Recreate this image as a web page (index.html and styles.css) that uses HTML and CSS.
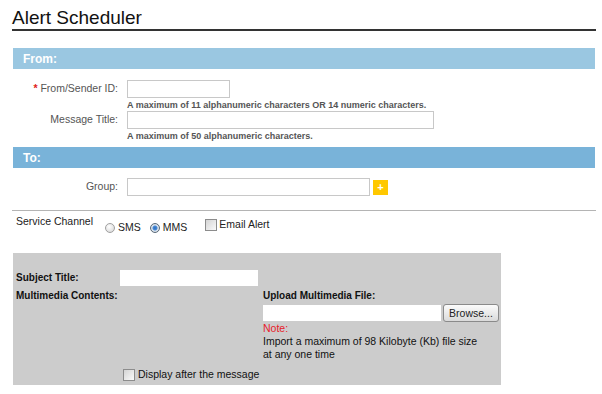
FILE: index.html
```html
<!DOCTYPE html>
<html>
<head>
  <meta charset="utf-8">
  <link rel="stylesheet" href="styles.css">
</head>
<body>
  <h1 class="page-title">Alert Scheduler</h1>

  <div class="section-bar from-bar">From:</div>
  <div class="field-grid from-fields">
    <label class="field-label"><span class="required">*</span> From/Sender ID:</label>
    <div class="field">
      <input type="text" class="text-input sender-input" />
      <div class="hint">A maximum of 11 alphanumeric characters OR 14 numeric characters.</div>
    </div>
    <label class="field-label">Message Title:</label>
    <div class="field">
      <input type="text" class="text-input title-input" />
      <div class="hint">A maximum of 50 alphanumeric characters.</div>
    </div>
  </div>

  <div class="section-bar to-bar">To:</div>
  <div class="field-grid to-fields">
    <label class="field-label">Group:</label>
    <div class="field group-field">
      <input type="text" class="text-input group-input" />
      <button class="add-btn">+</button>
    </div>
  </div>

  <div class="channel-row">
    <span class="channel-label">Service Channel</span>
    <label class="choice radio-choice"><input type="radio" name="channel" />SMS</label>
    <label class="choice radio-choice"><input type="radio" name="channel" checked />MMS</label>
    <label class="choice check-choice"><input type="checkbox" />Email Alert</label>
  </div>

  <div class="mms-box">
    <div class="mms-label subject-label">Subject Title:</div>
    <div><input type="text" class="plain-input subject-input" /></div>
    <div></div>

    <div class="mms-label contents-label">Multimedia Contents:</div>
    <div class="upload-col">
      <div class="mms-label">Upload Multimedia File:</div>
      <div class="upload-row">
        <input type="text" class="plain-input file-input" />
        <button class="browse-btn">Browse...</button>
      </div>
      <div class="note">Note:</div>
      <div class="note-text">Import a maximum of 98 Kilobyte (Kb) file size<br>at any one time</div>
    </div>

    <div></div>
    <label class="display-after"><input type="checkbox" />Display after the message</label>
  </div>
</body>
</html>
```

FILE: styles.css
```css
body {
  margin: 0;
  padding: 0 6px 0 12px;
  font-family: "Liberation Sans", Arial, sans-serif;
  font-size: 10.5px;
  color: #222;
  background: #fff;
}

.page-title {
  margin: 7px 0 17px;
  font-size: 19px;
  font-weight: normal;
  line-height: 22px;
  color: #111;
  border-bottom: 2px solid #333;
}

.section-bar {
  margin: 0 1px;
  height: 21px;
  line-height: 22px;
  padding-left: 10px;
  font-size: 12px;
  font-weight: bold;
  color: #fff;
}

.from-bar {
  background: #9ac7e1;
}

.to-bar {
  background: #79b3d9;
}

.field-grid {
  display: grid;
  grid-template-columns: 106px 1fr;
  column-gap: 9px;
  row-gap: 0;
}

.from-fields {
  padding: 11px 0 5px;
}

.to-fields {
  padding: 10px 0 14px;
  border-bottom: 1px solid #b4b4b4;
}

.field-label {
  text-align: right;
  color: #555;
  line-height: 17px;
}

.required {
  color: #e02020;
  font-weight: bold;
}

.text-input {
  display: block;
  box-sizing: border-box;
  height: 18px;
  margin: 0;
  padding: 0 3px;
  border: 1px solid #c8c8c8;
  background: #fff;
  font: inherit;
}

.sender-input {
  width: 103px;
}

.title-input {
  width: 307px;
}

.group-input {
  width: 243px;
}

.hint {
  margin-top: 2px;
  font-size: 9px;
  font-weight: bold;
  color: #555;
  line-height: 11px;
}

.group-field {
  display: flex;
  align-items: center;
  gap: 3px;
}

.add-btn {
  width: 15px;
  height: 15px;
  padding: 0;
  border: none;
  background: #ffc800;
  color: #fff;
  font: bold 11px/15px "Liberation Sans", Arial, sans-serif;
  text-align: center;
}

/* service channel row */
.channel-row {
  display: flex;
  align-items: flex-start;
  height: 20px;
  padding: 4px 0 0 4px;
  line-height: 13px;
}

.channel-label {
  margin-right: 12px;
}

.choice {
  display: flex;
  align-items: center;
  gap: 3px;
}

.radio-choice {
  margin-top: 6px;
  margin-right: 9px;
}

.radio-choice + .radio-choice {
  margin-right: 18px;
}

.check-choice {
  margin-top: 3px;
  gap: 2px;
}

.choice input,
.display-after input {
  appearance: none;
  margin: 0;
  flex: none;
}

.radio-choice input {
  width: 10px;
  height: 10px;
  border: 1px solid #a0a0a0;
  border-radius: 50%;
  box-sizing: border-box;
  background: radial-gradient(circle at 40% 35%, #fff, #d2d2d2);
}

.radio-choice input:checked {
  border-color: #5a6a7a;
  background: radial-gradient(circle, #2a6fc0 0, #4a8ad6 2px, #dfe6ee 3px, #c4ccd4 5px);
}

.check-choice input,
.display-after input {
  width: 12px;
  height: 12px;
  box-sizing: border-box;
  border: 1px solid #8c8c8c;
  background: linear-gradient(135deg, #d4d4d4, #fafafa);
}

/* MMS content box */
.mms-box {
  display: grid;
  grid-template-columns: 104px 143px 1fr;
  width: 488px;
  margin: 18px 0 0 1px;
  padding: 17px 0 4px 3px;
  box-sizing: border-box;
  background: #cccccc;
  color: #111;
}

.mms-label {
  font-size: 10px;
  font-weight: bold;
  line-height: 13px;
}

.subject-label {
  line-height: 16px;
}

.contents-label {
  grid-column: 1 / 3;
  margin-top: 3px;
}

.plain-input {
  display: block;
  box-sizing: border-box;
  height: 16px;
  margin: 0;
  padding: 0 3px;
  border: none;
  background: #fff;
  font: inherit;
}

.subject-input {
  width: 138px;
}

.upload-col {
  margin-top: 3px;
}

.upload-row {
  display: flex;
  align-items: center;
  gap: 2px;
  margin-top: 2px;
}

.file-input {
  width: 178px;
}

.browse-btn {
  width: 56px;
  height: 18px;
  padding: 0;
  border: 1px solid #8a8a8a;
  border-radius: 3px;
  background: linear-gradient(#fbfbfb, #dadada);
  font: 10.5px "Liberation Sans", Arial, sans-serif;
  color: #222;
}

.note {
  color: #e8202a;
  line-height: 13px;
}

.note-text {
  line-height: 13px;
}

.display-after {
  grid-column: 2 / 4;
  display: flex;
  align-items: center;
  gap: 3px;
  margin-top: 7px;
  padding-left: 3px;
  line-height: 13px;
}
```
